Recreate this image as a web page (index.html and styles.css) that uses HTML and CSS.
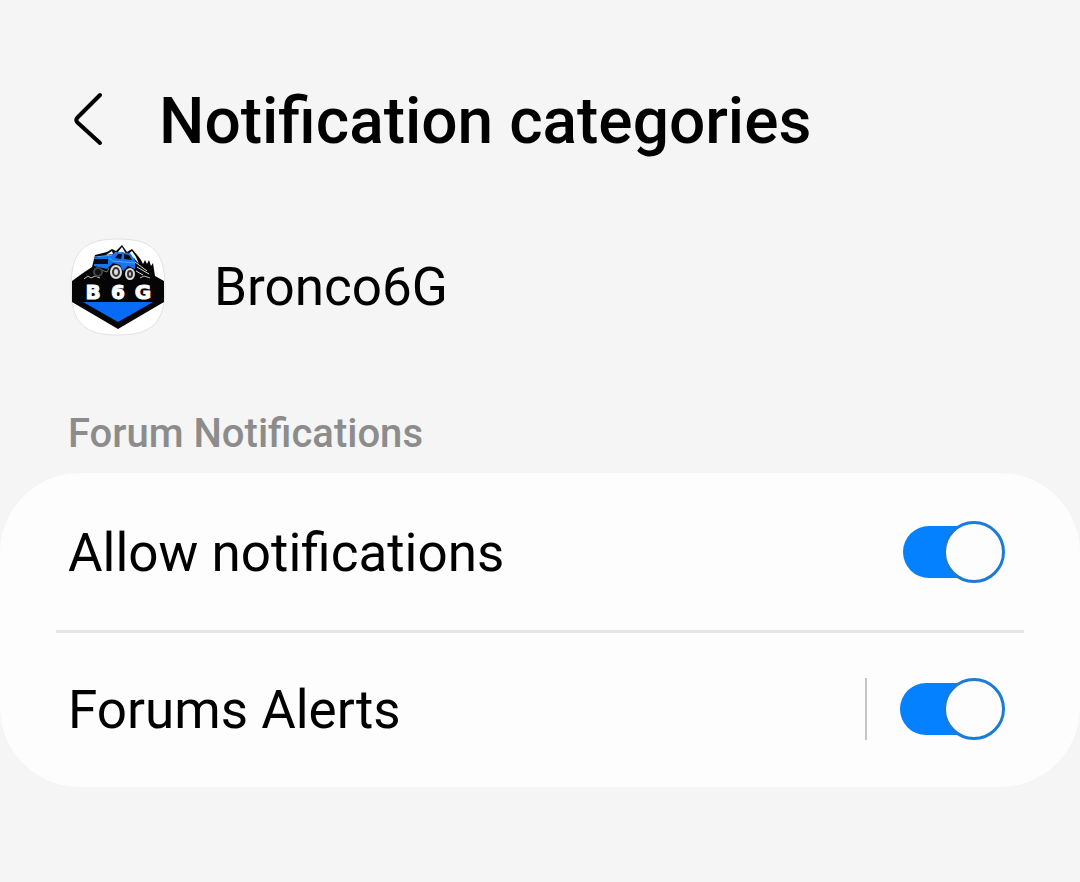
FILE: index.html
```
<!DOCTYPE html>
<html lang="en">
<head>
<meta charset="UTF-8" />
<meta name="viewport" content="width=device-width, initial-scale=1" />
<title>Notification categories</title>
<link rel="stylesheet" href="styles.css">
</head>
<body>

<header class="header">
  <button class="back-btn" type="button" aria-label="Back">
    <svg width="32" height="56" viewBox="0 0 32 56" fill="none" stroke="#000" stroke-width="4" stroke-linecap="round" stroke-linejoin="round">
      <path d="M28 1 L5.500 23.500 Q3 26 5.500 28.500 L28 49" />
    </svg>
  </button>
  <h1>Notification categories</h1>
</header>

<main>
  <div class="app">
    <svg class="app-icon" width="96" height="98" viewBox="0 0 96 98" role="img" aria-label="Bronco6G logo">
      <path d="M48 1 C82 1 95 13 95 49 C95 85 82 97 48 97 C14 97 1 85 1 49 C1 13 14 1 48 1Z" fill="#fff" stroke="#e2e2e2" />
      <!-- mountains and shield -->
      <path d="M2 43 L13 35 L22 29 L25 17 L37 14 L42 11 L46 13 L52 7 L57 14 L62 11 L68 18 L71 22 L73 26 L75 22 L77 26 L79 22 L81 28 L83 25 L85 38 L94 43 V64 L48 91 L2 64Z" fill="#050505" />
      <path d="M44 15 L48 14 L52 9 L56 16 L52 14 L49 17Z M58 16 L62 13 L66 19 L69 26 L64 20 L62 22Z M36 17 L42 13 L43 16Z" fill="#fff" />
      <path d="M65 24 L77 33 M67 29 L79 36 M66 33 L73 37" stroke="#ddd" stroke-width="1" />
      <path d="M14 41 L18 38 L21 40 L25 38 L30 40 M70 40 L74 38 L80 40" fill="none" stroke="#bbb" stroke-width="1" />
      <!-- truck -->
      <path d="M24 20 L40 17 L47 14 L60 15 L65 22 L65 31 L58 28 L53 33 L50 27 L43 25 L37 31 L24 28Z" fill="#1674ed" />
      <path d="M24 21 L38 21 L38 26 L24 26Z M48 16 L52 16 L51 21 L45 20Z M54 16 L59 17 L62 22 L54 21Z" fill="#050b18" />
      <path d="M39 20 L43 23 L65 25 M25 19 L42 17" fill="none" stroke="#5aa6ff" stroke-width="1" />
      <path d="M26 30 L37 34 L39 30" fill="none" stroke="#777" stroke-width="1" />
      <g fill="#333" stroke="#ddd" stroke-width="2">
        <ellipse cx="28" cy="34" rx="4" ry="4" fill="#111" stroke="#444" />
        <ellipse cx="46" cy="34" rx="5" ry="6" />
        <ellipse cx="60" cy="36" rx="4" ry="5" />
      </g>
      <ellipse cx="46" cy="34" rx="2" ry="3" fill="#ddd" />
      <ellipse cx="60" cy="36" rx="1" ry="2" fill="#ddd" />
      <path d="M13 64 H83 L48 84Z" fill="#086bf5" />
      <text class="app-icon-text" y="61" text-anchor="middle"><tspan x="23">B</tspan><tspan x="48">6</tspan><tspan x="73">G</tspan></text>
    </svg>
    <span class="app-name">Bronco6G</span>
  </div>

  <h2>Forum Notifications</h2>

  <div class="card">
    <div class="row">
      <label for="allow">Allow notifications</label>
      <input class="switch" type="checkbox" role="switch" id="allow" checked>
    </div>
    <div class="row row-split">
      <label for="alerts">Forums Alerts</label>
      <input class="switch" type="checkbox" role="switch" id="alerts" checked>
    </div>
  </div>
</main>

</body>
</html>
```
FILE: styles.css
```
*,
*::before,
*::after {
  box-sizing: border-box;
}

body {
  margin: 0;
  padding-top: 82px;
  background-color: #f5f5f5;
  color: #000;
  font-family: Roboto, "Liberation Sans", sans-serif;
}

.header {
  display: flex;
  align-items: center;
  gap: 55px;
  padding: 0 72px;
}

.back-btn {
  display: flex;
  padding: 0;
  border: none;
  background: none;
  cursor: pointer;
}

.back-btn svg {
  overflow: visible;
}

h1 {
  margin: 0;
  font-size: 64px;
  font-weight: 500;
  line-height: 80px;
}

.app {
  display: flex;
  align-items: center;
  gap: 48px;
  margin-top: 76px;
  padding: 0 70px;
}

.app-icon-text {
  fill: #fff;
  stroke: #fff;
  stroke-width: 1px;
  font-family: "DejaVu Sans", sans-serif;
  font-size: 20px;
  font-weight: bold;
}

.app-name {
  font-size: 53px;
  line-height: 64px;
}

h2 {
  margin: 74px 68px 15px;
  color: #8c8c8c;
  font-size: 40px;
  font-weight: 500;
  line-height: 48px;
}

.card {
  background-color: #fdfdfd;
  border-radius: 80px;
}

.row {
  display: flex;
  align-items: center;
  justify-content: space-between;
  height: 157px;
  padding: 0 75px 0 68px;
  font-size: 53px;
  line-height: 60px;
}

.row label {
  padding-top: 2px;
}

.row-split {
  position: relative;
}

/* divider between the rows */
.row + .row::before {
  content: '';
  position: absolute;
  top: 0;
  left: 56px;
  right: 56px;
  height: 3px;
  background: #e6e6e6;
}

.row-split label {
  flex: 1;
  margin-right: 33px;
  border-right: 2px solid #c4c4c4;
}

.switch {
  appearance: none;
  position: relative;
  width: 102px;
  height: 62px;
  margin: 0;
  cursor: pointer;
}

.row-split .switch {
  width: 105px;
}

.switch::before {
  content: '';
  position: absolute;
  top: 5px;
  left: 0;
  right: 5px;
  height: 52px;
  border-radius: 26px;
  background: #bbb;
}

.switch::after {
  content: '';
  position: absolute;
  top: 0;
  left: 0;
  width: 62px;
  height: 62px;
  border: 3px solid #999;
  border-radius: 50%;
  background: #fdfdfd;
}

.switch:checked::before {
  background: #0381fe;
}

.switch:checked::after {
  left: auto;
  right: 0;
  border-color: #1c7cd5;
}
```
